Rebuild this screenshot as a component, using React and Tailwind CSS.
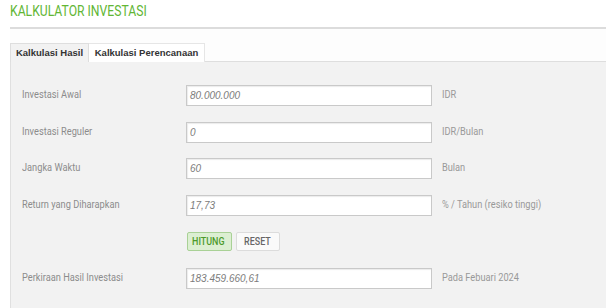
import React from "react";

const rows = [
  { label: "Investasi Awal", value: "80.000.000", unit: "IDR" },
  { label: "Investasi Reguler", value: "0", unit: "IDR/Bulan" },
  { label: "Jangka Waktu", value: "60", unit: "Bulan" },
  { label: "Return yang Diharapkan", value: "17,73", unit: "% / Tahun (resiko tinggi)" },
];

function Cond({ children, className = "" }) {
  return (
    <span className={"inline-block origin-left scale-x-[0.84] whitespace-nowrap " + className}>
      {children}
    </span>
  );
}

function Row({ label, value, unit }) {
  return (
    <div className="flex h-[21px] items-center">
      <div className="w-[164px] text-[11px] text-[#8c8c8c]">
        <Cond>{label}</Cond>
      </div>
      <div className="flex h-[21px] w-[246px] items-center border border-[#c9c9c9] bg-white pl-[3px] shadow-[inset_1px_1px_1px_rgba(0,0,0,0.08)]">
        <span className="font-['Liberation_Sans',sans-serif] text-[10px] italic text-[#7c7c7c]">{value}</span>
      </div>
      <div className="ml-[10px] text-[11px] text-[#999]">
        <Cond>{unit}</Cond>
      </div>
    </div>
  );
}

export default function App() {
  return (
    <div className="h-[308px] w-[606px] overflow-hidden bg-white font-['Roboto',sans-serif]">
      <div className="pl-[10px]">
        <div className="flex h-[29px] items-start border-b-2 border-[#dcdcdc] pt-[3px]">
          <Cond className="scale-x-[0.8] text-[14.5px] leading-[18px] text-[#62b635]">KALKULATOR INVESTASI</Cond>
        </div>
        <div className="bg-[#fdfdfd] pt-[14px]">
          <div className="flex h-[19px] border-b border-[#dedede] font-['Liberation_Sans',sans-serif] text-[9.5px] font-bold text-[#333]">
            <div className="relative z-10 -mb-px flex h-[19px] w-[79px] items-center justify-center border-l border-r border-t border-[#dedede] bg-[#f2f2f2]">
              Kalkulasi Hasil
            </div>
            <div className="flex h-[19px] w-[116px] items-center justify-center border-r border-t border-[#e6e6e6] bg-white">
              Kalkulasi Perencanaan
            </div>
          </div>
        </div>
        <div className="h-[300px] border-l border-[#e0e0e0] bg-[#f2f2f2] pl-[11px] pt-[23px]">
          <div className="flex flex-col gap-[15.5px]">
            {rows.map((r) => (
              <Row key={r.label} {...r} />
            ))}
            <div className="flex h-[21px] items-center pl-[165px]">
              <div className="flex h-[19px] w-[45px] items-center justify-center rounded-[2px] border border-[#a9d196] bg-[#dcefd2]">
                <Cond className="scale-x-[0.85] pl-[6px] text-[10.5px] font-medium text-[#4c9a2a]">HITUNG</Cond>
              </div>
              <div className="ml-[4px] flex h-[19px] w-[44px] items-center justify-center rounded-[2px] border border-[#dcdcdc] bg-[#fafafa]">
                <Cond className="scale-x-[0.85] pl-[6px] text-[10.5px] font-medium text-[#666]">RESET</Cond>
              </div>
            </div>
            <Row label="Perkiraan Hasil Investasi" value="183.459.660,61" unit="Pada Febuari 2024" />
          </div>
        </div>
      </div>
    </div>
  );
}
